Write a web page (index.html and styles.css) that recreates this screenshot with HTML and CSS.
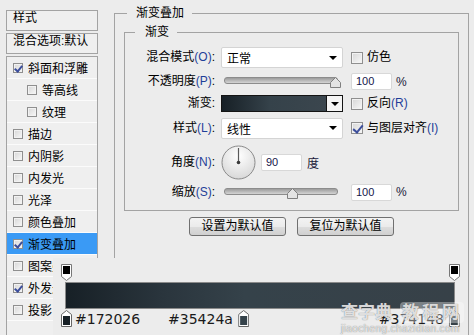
FILE: index.html
```html
<!DOCTYPE html>
<html lang="zh-CN">
<head>
    <meta charset="UTF-8">
    <meta name="viewport" content="width=device-width, initial-scale=1.0">
    <title>图层样式 - 渐变叠加</title>
    <link rel="stylesheet" href="styles.css">
</head>
<body>
    <div class="dialog">
        <aside class="style-panel">
            <div class="panel-head">样式</div>
            <div class="panel-head">混合选项:默认</div>
            <ul class="fx-list">
                <li><span class="check on"></span>斜面和浮雕</li>
                <li class="sub"><span class="check"></span>等高线</li>
                <li class="sub"><span class="check"></span>纹理</li>
                <li><span class="check"></span>描边</li>
                <li><span class="check"></span>内阴影</li>
                <li><span class="check"></span>内发光</li>
                <li><span class="check"></span>光泽</li>
                <li><span class="check"></span>颜色叠加</li>
                <li class="active"><span class="check on"></span>渐变叠加</li>
                <li><span class="check"></span>图案叠加</li>
                <li><span class="check on"></span>外发光</li>
                <li><span class="check"></span>投影</li>
            </ul>
        </aside>

        <main class="settings">
            <fieldset class="group outer">
                <legend>渐变叠加</legend>
                <fieldset class="group inner">
                    <legend>渐变</legend>
                    <div class="form-grid">
                        <label>混合模式<span class="key">(O)</span>:</label>
                        <div class="select">正常<i class="caret"></i></div>
                        <label class="check-label"><span class="check big"></span><span>仿色</span></label>

                        <label>不透明度<span class="key">(P)</span>:</label>
                        <div class="slider">
                            <svg class="thumb" style="left: 97.8%" width="11" height="11" viewBox="0 0 11 11"><path d="M5.5 0.5L10.5 5.5V10.5H0.5V5.5Z" fill="#e4e4e4" stroke="#808080"/></svg>
                        </div>
                        <div class="num-row"><span class="num">100</span><span class="unit">%</span></div>

                        <label>渐变:</label>
                        <div class="swatch">
                            <span class="swatch-fill"></span>
                            <span class="swatch-btn"><i class="caret"></i></span>
                        </div>
                        <label class="check-label"><span class="check big"></span><span>反向<span class="key">(R)</span></span></label>

                        <label>样式<span class="key">(L)</span>:</label>
                        <div class="select">线性<i class="caret"></i></div>
                        <label class="check-label"><span class="check big on"></span><span>与图层对齐<span class="key">(I)</span></span></label>

                        <label>角度<span class="key">(N)</span>:</label>
                        <div class="angle">
                            <svg class="dial" width="35" height="35" viewBox="0 0 35 35">
                                <defs>
                                    <radialGradient id="dialFill" cx="50%" cy="30%" r="70%">
                                        <stop offset="0" stop-color="#ffffff"/>
                                        <stop offset="1" stop-color="#d8d8d8"/>
                                    </radialGradient>
                                </defs>
                                <circle cx="17.5" cy="17.5" r="16.5" fill="url(#dialFill)" stroke="#8a8a8a"/>
                                <line x1="17.5" y1="17.5" x2="17.5" y2="3" stroke="#5a5a5a" stroke-width="1.2"/>
                                <circle cx="17.5" cy="17.5" r="1.8" fill="#3a3a3a"/>
                            </svg>
                            <span class="num">90</span>
                            <span class="unit">度</span>
                        </div>
                        <span></span>

                        <label>缩放<span class="key">(S)</span>:</label>
                        <div class="slider">
                            <svg class="thumb" style="left: 60%" width="11" height="11" viewBox="0 0 11 11"><path d="M5.5 0.5L10.5 5.5V10.5H0.5V5.5Z" fill="#e4e4e4" stroke="#808080"/></svg>
                        </div>
                        <div class="num-row"><span class="num">100</span><span class="unit">%</span></div>
                    </div>
                </fieldset>

                <div class="buttons">
                    <button type="button" class="btn">设置为默认值</button>
                    <button type="button" class="btn">复位为默认值</button>
                </div>
            </fieldset>
        </main>

        <!-- gradient editor strip pasted over the dialog -->
        <div class="grad-editor">
            <div class="stops">
                <svg class="stop" style="left: 0%" width="11" height="17" viewBox="0 0 11 17"><path d="M0.5 0.5H10.5V12.5L5.5 16.5L0.5 12.5Z" fill="#fff" stroke="#777"/><rect x="2" y="2" width="7" height="8" fill="#000"/></svg>
                <svg class="stop" style="left: 100%" width="11" height="17" viewBox="0 0 11 17"><path d="M0.5 0.5H10.5V12.5L5.5 16.5L0.5 12.5Z" fill="#fff" stroke="#777"/><rect x="2" y="2" width="7" height="8" fill="#000"/></svg>
            </div>
            <div class="bar"></div>
            <div class="stops bottom">
                <div class="color-stop first" style="left: 0%">
                    <svg width="11" height="17" viewBox="0 0 11 17"><path d="M5.5 0.5L10.5 4.5V16.5H0.5V4.5Z" fill="#fff" stroke="#666"/><rect x="2" y="6" width="7" height="9" fill="#172026"/></svg>
                    <span class="hex">#172026</span>
                </div>
                <div class="color-stop" style="left: 45.6%">
                    <span class="hex">#35424a</span>
                    <svg width="11" height="17" viewBox="0 0 11 17"><path d="M5.5 0.5L10.5 4.5V16.5H0.5V4.5Z" fill="#fff" stroke="#666"/><rect x="2" y="6" width="7" height="9" fill="#35424a"/></svg>
                </div>
                <div class="color-stop" style="left: 100%">
                    <span class="hex">#374148</span>
                    <svg width="11" height="17" viewBox="0 0 11 17"><path d="M5.5 0.5L10.5 4.5V16.5H0.5V4.5Z" fill="#fff" stroke="#666"/><rect x="2" y="6" width="7" height="9" fill="#374148"/></svg>
                </div>
            </div>
        </div>

        <div class="watermark">
            <div class="wm-big"><span>查字典</span><span class="wm-box">教程网</span></div>
            <div class="wm-url">jiaocheng.chazidian.com</div>
        </div>
    </div>
</body>
</html>
```

FILE: styles.css
```css
* {
    box-sizing: border-box;
}

body {
    margin: 0;
    width: 474px;
    height: 335px;
    overflow: hidden;
    background: #ececec;
    font-family: "Liberation Sans", "Noto Sans CJK SC", sans-serif;
    font-size: 12px;
    color: #000;
}

.dialog {
    position: relative;
    display: flex;
    height: 335px;
    overflow: hidden;
    padding: 6px 0 0 6px;
}

/* left list of effects */
.style-panel {
    width: 92px;
    flex: none;
    margin-top: 4px;
    display: flex;
    flex-direction: column;
    gap: 2px;
}

.panel-head {
    height: 21px;
    flex: none;
    border: 1px solid #a3a3a3;
    padding-left: 6px;
    line-height: 15px;
    background: #efefef;
    white-space: nowrap;
}

.fx-list {
    flex: 1;
    list-style: none;
    margin: 0;
    padding: 0;
    overflow: hidden;
    border: 1px solid #a3a3a3;
    border-bottom: none;
    background: #efefef;
}

.fx-list li {
    height: 22px;
    display: flex;
    align-items: center;
    gap: 5px;
    padding-left: 6px;
    border-bottom: 1px solid #fbfbfb;
    white-space: nowrap;
    overflow: hidden;
}

.fx-list li.sub {
    padding-left: 20px;
}

.fx-list li.active {
    background: #3a9af5;
}

.check {
    position: relative;
    flex: none;
    width: 10px;
    height: 10px;
    border: 1px solid #8f8f8f;
    background: linear-gradient(135deg, #d6d6d6, #f8f8f8);
    box-shadow: inset 0 0 0 1px #f2f2f2;
}

.check.big {
    width: 12px;
    height: 12px;
}

.check.on::after {
    content: "";
    position: absolute;
    left: 2px;
    top: 0;
    width: 3px;
    height: 6px;
    border-right: 2px solid #3c4e9c;
    border-bottom: 2px solid #3c4e9c;
    transform: rotate(40deg);
}

.check.big.on::after {
    left: 3px;
    top: 0;
    width: 4px;
    height: 8px;
}

/* right side settings */
.settings {
    margin-left: 16px;
}

.group {
    margin: 0;
    padding: 0;
    min-width: 0;
    border: 1px solid #a3a3a3;
}

.group > legend {
    line-height: 15px;
    padding: 0 8px 0 9px;
}

.outer {
    width: 355px;
    height: 329px;
    border-bottom: none;
}

.outer > legend {
    margin-left: 12px;
}

.inner {
    width: 335px;
    margin: 4px 0 0 9px;
}

.inner > legend {
    margin-left: 10px;
    padding-left: 10px;
}

.form-grid {
    display: grid;
    grid-template-columns: 96px 130px 1fr;
    grid-template-rows: 23px 25px 19px 30px 38px 22px;
    align-items: center;
    padding: 6px 0 7px 0;
}

.form-grid > label {
    text-align: right;
    padding-right: 6px;
    line-height: 15px;
    white-space: nowrap;
}

.key {
    color: #1f3f99;
}

.form-grid > .check-label {
    display: flex;
    align-items: center;
    gap: 4px;
    text-align: left;
    padding-right: 0;
}

.select {
    width: 122px;
    height: 21px;
    display: flex;
    align-items: center;
    justify-content: space-between;
    padding: 0 5px 0 5px;
    background: #fff;
    border: 1px solid #d4d4d4;
    border-radius: 2px;
}

.caret {
    width: 0;
    height: 0;
    border-left: 4px solid transparent;
    border-right: 4px solid transparent;
    border-top: 4px solid #000;
}

.slider {
    position: relative;
    width: 114px;
    height: 11px;
    margin: 2px 0 0 3px;
}

.slider::before {
    content: "";
    display: block;
    height: 5px;
    border: 1px solid #8c8c8c;
    border-radius: 3px;
    background: linear-gradient(#9c9c9c, #d4d4d4);
}

.thumb {
    position: absolute;
    top: 0;
    margin-left: -5px;
}

.num-row,
.angle {
    display: flex;
    align-items: center;
    gap: 4px;
}

.num {
    width: 41px;
    height: 17px;
    padding-left: 4px;
    background: #fff;
    border: 1px solid #d8d8d8;
    border-radius: 2px;
    font-size: 11px;
    line-height: 15px;
    color: #15154a;
}

.unit {
    color: #1a1a3a;
}

.angle {
    gap: 5px;
}

.dial {
    flex: none;
}

.swatch {
    display: flex;
    width: 122px;
    height: 17px;
    border: 1px solid #141414;
}

.swatch-fill {
    flex: 1;
    background: linear-gradient(90deg, #172026, #35424a 46%, #3b464e);
}

.swatch-btn {
    width: 16px;
    display: flex;
    align-items: center;
    justify-content: center;
    border-left: 1px solid #141414;
    background: #f4f4f4;
}

.buttons {
    display: flex;
    justify-content: center;
    gap: 11px;
    margin-top: 6px;
}

.btn {
    width: 97px;
    height: 19px;
    padding: 0;
    border: 1px solid #707070;
    border-radius: 3px;
    background: linear-gradient(#f3f3f3 0%, #ebebeb 50%, #dddddd 51%, #d0d0d0 100%);
    font-family: "Liberation Sans", "Noto Sans CJK SC", sans-serif;
    font-size: 12px;
    line-height: 15px;
    color: #000;
}

/* gradient editor strip */
.grad-editor {
    position: absolute;
    left: 53px;
    top: 258px;
    width: 409px;
    height: 77px;
    padding: 6px 0 0 12px;
    background: #ececec;
}

.stops {
    position: relative;
    width: 388px;
    height: 18px;
    margin-left: 1px;
}

.stop {
    position: absolute;
    top: 0;
    margin-left: -5px;
}

.bar {
    width: 390px;
    height: 27px;
    border: 1px solid #8a8a8a;
    background: linear-gradient(90deg, #172026, #2a353d 25%, #35424a 46%, #374148);
}

.stops.bottom {
    margin-top: 1px;
}

.color-stop {
    position: absolute;
    top: 0;
    display: flex;
    align-items: flex-end;
    gap: 5px;
    transform: translateX(calc(-100% + 6px));
}

.color-stop.first {
    gap: 3px;
    transform: translateX(-5px);
}

.hex {
    font-family: "DejaVu Sans", sans-serif;
    font-size: 14px;
    line-height: 15px;
    color: #1a1a1a;
}

.watermark {
    position: absolute;
    left: 341px;
    top: 302px;
    width: 123px;
    color: rgba(255, 255, 255, 0.8);
    text-shadow: 0 0 1px rgba(80, 80, 80, 0.9);
}

.wm-big {
    display: flex;
    justify-content: space-between;
    font-size: 17px;
    font-weight: bold;
    line-height: 21px;
}

.wm-box {
    padding: 0 2px;
    letter-spacing: 3px;
    border-radius: 4px;
    background: rgba(255, 255, 255, 0.35);
}

.wm-url {
    font-size: 10px;
    line-height: 11px;
    letter-spacing: 0.4px;
}
```
